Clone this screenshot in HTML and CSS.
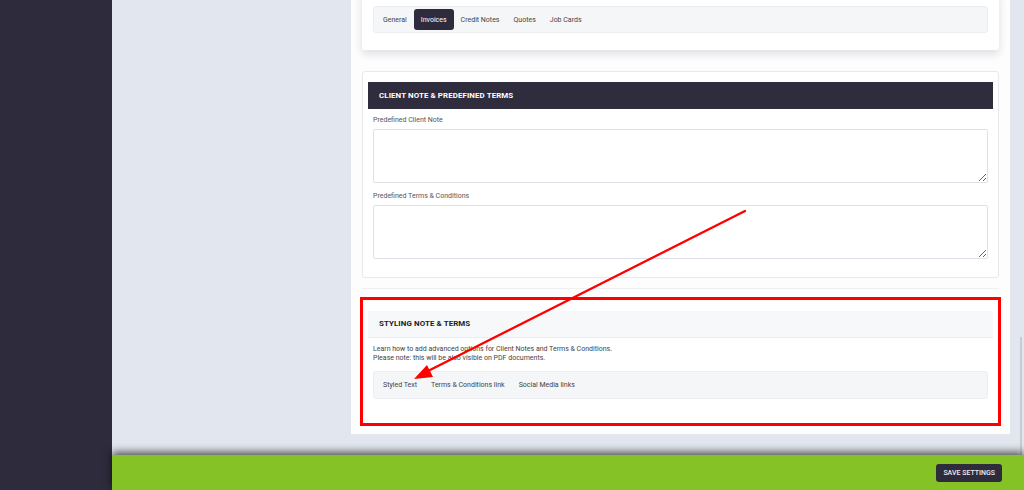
FILE: index.html
```html
<!DOCTYPE html>
<html lang="en">
<head>
    <meta charset="UTF-8">
    <meta name="viewport" content="width=device-width, initial-scale=1.0">
    <title>Settings - Invoices</title>
    <link rel="stylesheet" href="styles.css">
</head>
<body>
    <aside class="sidebar"></aside>

    <div class="main">
        <div class="content">
            <div class="panel">
                <!-- settings section tabs -->
                <section class="card card-nav">
                    <nav class="tabs">
                        <span class="tab">General</span>
                        <span class="tab active">Invoices</span>
                        <span class="tab">Credit Notes</span>
                        <span class="tab">Quotes</span>
                        <span class="tab">Job Cards</span>
                    </nav>
                </section>

                <section class="card card-terms">
                    <h2 class="card-head dark">CLIENT NOTE &amp; PREDEFINED TERMS</h2>
                    <div class="card-body">
                        <label class="field-label" for="clientNote">Predefined Client Note</label>
                        <textarea id="clientNote" class="field"></textarea>
                        <label class="field-label" for="terms">Predefined Terms &amp; Conditions</label>
                        <textarea id="terms" class="field"></textarea>
                    </div>
                </section>

                <div class="divider"></div>

                <section class="card card-help marked">
                    <h2 class="card-head light">STYLING NOTE &amp; TERMS</h2>
                    <div class="card-body">
                        <p class="help-text">
                            Learn how to add advanced options for Client Notes and Terms &amp; Conditions.<br>
                            Please note: this will be also visible on PDF documents.
                        </p>
                        <nav class="tabs tabs-tall">
                            <span class="tab">Styled Text</span>
                            <span class="tab">Terms &amp; Conditions link</span>
                            <span class="tab">Social Media links</span>
                        </nav>
                    </div>
                </section>
            </div>
            <div class="scroll-thumb"></div>
        </div>

        <footer class="save-bar">
            <button class="save-button">SAVE SETTINGS</button>
        </footer>
    </div>

    <!-- red pointer over the help tabs -->
    <svg class="pointer" width="1024" height="490" viewBox="0 0 1024 490">
        <line x1="745" y1="211" x2="428" y2="371" stroke="#ff0000" stroke-width="2.4" stroke-linecap="round"/>
        <polygon points="414,379 427,365 433,377" fill="#ff0000"/>
    </svg>
</body>
</html>
```

FILE: styles.css
```css
body, html {
    margin: 0;
    padding: 0;
    height: 100%;
    font-family: Roboto, "Liberation Sans", sans-serif;
}

body {
    display: flex;
    overflow: hidden;
}

.sidebar {
    width: 112px;
    flex-shrink: 0;
    background-color: #2e2b3d;
}

.main {
    flex: 1;
    display: flex;
    flex-direction: column;
    min-width: 0;
}

.content {
    flex: 1;
    min-height: 0;
    background-color: #e2e6ee;
    padding-left: 239px;
    position: relative;
    overflow: hidden;
}

.panel {
    width: 659px;
    box-sizing: border-box;
    background-color: #fdfdfe;
    padding: 0 11px 10px;
}

.card {
    background-color: #fff;
    border: 1px solid #e7e9ee;
    border-radius: 3px;
    padding: 10px 5px 17px;
}

.card-nav {
    border: none;
    margin-top: -10px;
    padding: 16px 11px 17px;
    margin-bottom: 21px;
    box-shadow: 0 4px 8px rgba(30, 35, 50, 0.14);
}

.card-terms {
    padding-bottom: 18px;
}

.card-head {
    margin: 0;
    height: 27px;
    line-height: 27px;
    padding: 0 11px;
    font-size: 7.9px;
    font-weight: 700;
    letter-spacing: 0.1px;
}

.card-head.dark {
    background-color: #2f2c3e;
    color: #fff;
}

.card-head.light {
    background-color: #f7f8fa;
    color: #222;
    border-bottom: 1px solid #eaecf0;
    height: 26px;
    line-height: 26px;
}

.card-body {
    padding: 0 5px;
}

.field-label {
    display: block;
    font-size: 7px;
    line-height: 8px;
    color: #555;
    margin: 7px 0 5px;
}

.field-label + .field + .field-label {
    margin-top: 9px;
}

.field {
    display: block;
    width: 100%;
    height: 54px;
    box-sizing: border-box;
    border: 1px solid #dde1e8;
    border-radius: 2px;
    background-color: #fff;
    margin: 0;
}

.divider {
    height: 1px;
    background-color: #eef0f3;
    margin: 10px 0;
}

.card-help {
    padding-top: 11px;
    padding-bottom: 24px;
}

.marked {
    border-radius: 0;
    outline: 3px solid #ff0000;
    outline-offset: -1px;
}

.help-text {
    margin: 7px 0 0;
    font-size: 7px;
    line-height: 9px;
    color: #444;
}

.tabs {
    display: flex;
    height: 27px;
    box-sizing: border-box;
    padding: 2px;
    background-color: #f5f6f8;
    border: 1px solid #eceef2;
    border-radius: 3px;
}

.tabs-tall {
    height: 28px;
    margin-top: 8px;
}

.tab {
    padding: 0 7px;
    font-size: 7px;
    color: #444;
    display: flex;
    align-items: center;
    border-radius: 3px;
}

.tab.active {
    background-color: #2e2b3d;
    color: #fff;
}

.scroll-thumb {
    position: absolute;
    right: 2px;
    top: 337px;
    bottom: 0;
    width: 2px;
    background-color: #c8cbd2;
}

.save-bar {
    height: 35px;
    flex-shrink: 0;
    background-color: #84c225;
    display: flex;
    justify-content: flex-end;
    align-items: center;
    padding-right: 22px;
    box-shadow: 0 -3px 8px rgba(0, 0, 0, 0.65);
    position: relative;
    z-index: 1;
}

.save-button {
    height: 18px;
    padding: 0 7px;
    border: none;
    border-radius: 3px;
    background-color: #2e2b3d;
    color: #ececf2;
    font-family: Roboto, "Liberation Sans", sans-serif;
    font-size: 7px;
    font-weight: 500;
    cursor: pointer;
}

.pointer {
    position: fixed;
    left: 0;
    top: 0;
    pointer-events: none;
    z-index: 2;
}
```
